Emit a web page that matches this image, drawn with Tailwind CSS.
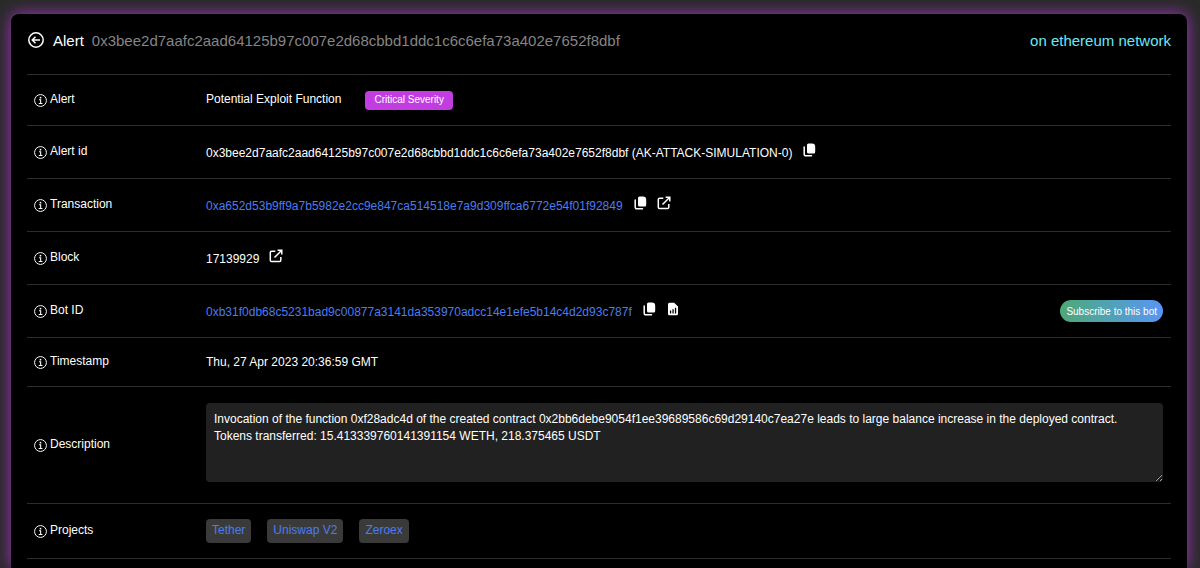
<!DOCTYPE html>
<html lang="en">
<head>
<meta charset="utf-8">
<meta name="viewport" content="width=device-width, initial-scale=1">
<title>Alert details</title>
<script src="https://cdn.jsdelivr.net/npm/@tailwindcss/browser@4"></script>
</head>
<body class="min-h-screen overflow-x-hidden bg-[#2a2a2a] font-['Liberation_Sans',Arial,sans-serif] text-[12px] leading-[17px] text-white">
<svg class="hidden" aria-hidden="true">
  <symbol id="info" viewBox="0 0 16 16"><circle cx="8" cy="8" r="7.3" fill="none" stroke="currentColor" stroke-width="1.2"/><circle cx="8" cy="4.500" r="1.100" fill="currentColor"/><path d="M6.200 7h2v4.600M5.800 11.600h4.600" fill="none" stroke="currentColor" stroke-width="1.300"/></symbol>
  <symbol id="copy" viewBox="0 0 14 14"><path d="M6.500 0.500h3.500q3.200 0 3.200 3.200V9a1.500 1.500 0 0 1-1.500 1.500H6.500A1.500 1.500 0 0 1 5 9V2A1.500 1.500 0 0 1 6.500.5z" fill="currentColor"/><path d="M2.200 4v7.300a1.500 1.500 0 0 0 1.500 1.500H9.500" fill="none" stroke="currentColor" stroke-width="1.500" stroke-linecap="round"/></symbol>
  <symbol id="open" viewBox="0 0 14 14"><path d="M6.300 2.300H2.600A1.300 1.300 0 0 0 1.300 3.600v7.700a1.300 1.300 0 0 0 1.300 1.300h7.900a1.300 1.300 0 0 0 1.300-1.300V8M8.600 1.200h4.200v4.200M12.500 1.500L5.500 8.500" fill="none" stroke="currentColor" stroke-width="1.500"/></symbol>
  <symbol id="report" viewBox="0 0 14 14"><path fill-rule="evenodd" d="M3.500.8h4.700L12 4.600v7.100a1.500 1.500 0 0 1-1.500 1.500h-7A1.500 1.500 0 0 1 2 11.700V2.300A1.500 1.500 0 0 1 3.500.8zM3.900 8.600v2.800h1.300V8.600zM6.400 7.200v4.200h1.300V7.200zM8.900 5.800v5.600h1.300V5.800z" fill="currentColor"/></symbol>
</svg>
<main class="mx-[11px] mr-[13px] mt-[14px] min-h-[calc(100vh-14px)] rounded-t-lg bg-black px-4 shadow-[0_0_15px_0_#a232c0]">
  <header class="flex h-[60px] items-center pb-2 text-[15px]">
    <button type="button" aria-label="Back" class="ml-px mr-[9px]">
      <svg class="size-4" viewBox="0 0 16 16" fill="none" stroke="currentColor" stroke-width="1.500"><circle cx="8" cy="8" r="7.200"/><path d="M12 8H4.500M7.500 4.800L4.300 8l3.200 3.200"/></svg>
    </button>
    <h1 class="flex gap-2"><span>Alert</span><span class="text-[#858585]">0x3bee2d7aafc2aad64125b97c007e2d68cbbd1ddc1c6c6efa73a402e7652f8dbf</span></h1>
    <span class="ml-auto text-[#67e8f9]">on ethereum network</span>
  </header>
  <table class="w-full text-left">
    <tbody>
      <tr class="h-[51px] border-y border-[#2c2c2c]">
        <th scope="row" class="w-[179px] pl-[7px] font-normal"><span class="flex items-center gap-[3px]"><svg class="size-[13px]"><use href="#info"/></svg><span class="pb-0.5">Alert</span></span></th>
        <td class="pr-2"><div class="flex items-center gap-6"><span class="pb-0.5">Potential Exploit Function</span><span class="h-[19px] rounded bg-[#c13de2] px-[9px] text-[10px]">Critical Severity</span></div></td>
      </tr>
      <tr class="h-[53px] border-b border-[#2c2c2c]">
        <th scope="row" class="pl-[7px] font-normal"><span class="flex items-center gap-[3px]"><svg class="size-[13px]"><use href="#info"/></svg><span class="pb-0.5">Alert id</span></span></th>
        <td class="pr-2"><div class="flex items-center gap-[10px]"><span class="pt-0.5">0x3bee2d7aafc2aad64125b97c007e2d68cbbd1ddc1c6c6efa73a402e7652f8dbf (AK-ATTACK-SIMULATION-0)</span><button type="button" aria-label="Copy alert id" class="pb-1"><svg class="size-[14px]"><use href="#copy"/></svg></button></div></td>
      </tr>
      <tr class="h-[53px] border-b border-[#2c2c2c]">
        <th scope="row" class="pl-[7px] font-normal"><span class="flex items-center gap-[3px]"><svg class="size-[13px]"><use href="#info"/></svg><span class="pb-0.5">Transaction</span></span></th>
        <td class="pr-2"><div class="flex items-center gap-[10px]"><a href="#" class="pt-0.5 text-[#4a7df0]">0xa652d53b9ff9a7b5982e2cc9e847ca514518e7a9d309ffca6772e54f01f92849</a><button type="button" aria-label="Copy transaction" class="pb-1"><svg class="size-[14px]"><use href="#copy"/></svg></button><a href="#" aria-label="Open transaction" class="pb-1"><svg class="size-[14px]"><use href="#open"/></svg></a></div></td>
      </tr>
      <tr class="h-[53px] border-b border-[#2c2c2c]">
        <th scope="row" class="pl-[7px] font-normal"><span class="flex items-center gap-[3px]"><svg class="size-[13px]"><use href="#info"/></svg><span class="pb-0.5">Block</span></span></th>
        <td class="pr-2"><div class="flex items-center gap-[10px]"><span class="pt-0.5">17139929</span><a href="#" aria-label="Open block" class="pb-1"><svg class="size-[14px]"><use href="#open"/></svg></a></div></td>
      </tr>
      <tr class="h-[53px] border-b border-[#2c2c2c]">
        <th scope="row" class="pl-[7px] font-normal"><span class="flex items-center gap-[3px]"><svg class="size-[13px]"><use href="#info"/></svg><span class="pb-0.5">Bot ID</span></span></th>
        <td class="pr-2"><div class="flex items-center gap-[10px]"><a href="#" class="pt-0.5 text-[#4a7df0]">0xb31f0db68c5231bad9c00877a3141da353970adcc14e1efe5b14c4d2d93c787f</a><button type="button" aria-label="Copy bot ID" class="pb-1"><svg class="size-[14px]"><use href="#copy"/></svg></button><a href="#" aria-label="Bot report" class="pb-1"><svg class="size-[14px]"><use href="#report"/></svg></a><button type="button" class="ml-auto h-[22px] rounded-full bg-linear-to-r from-[#4fa874] to-[#5b94f5] px-[6px] text-[10px]">Subscribe to this bot</button></div></td>
      </tr>
      <tr class="h-[49px] border-b border-[#2c2c2c]">
        <th scope="row" class="pl-[7px] font-normal"><span class="flex items-center gap-[3px]"><svg class="size-[13px]"><use href="#info"/></svg><span class="pb-0.5">Timestamp</span></span></th>
        <td class="pr-2">Thu, 27 Apr 2023 20:36:59 GMT</td>
      </tr>
      <tr class="h-[117px] border-b border-[#2c2c2c]">
        <th scope="row" class="pl-[7px] font-normal"><label for="description" class="flex items-center gap-[3px]"><svg class="size-[13px]"><use href="#info"/></svg><span class="pb-0.5">Description</span></label></th>
        <td class="pb-[6px] pr-2"><textarea id="description" readonly class="block h-[79px] w-full rounded bg-[#212121] p-2">Invocation of the function 0xf28adc4d of the created contract 0x2bb6debe9054f1ee39689586c69d29140c7ea27e leads to large balance increase in the deployed contract.
Tokens transferred: 15.413339760141391154 WETH, 218.375465 USDT</textarea></td>
      </tr>
      <tr class="h-[55px] border-b border-[#2c2c2c]">
        <th scope="row" class="pl-[7px] font-normal"><span class="flex items-center gap-[3px]"><svg class="size-[13px]"><use href="#info"/></svg><span class="pb-0.5">Projects</span></span></th>
        <td class="pr-2"><div class="flex gap-4 text-[#4a7df0]"><a href="#" class="rounded bg-[#3a3a3a] px-[6px] pb-1 pt-[3px]">Tether</a><a href="#" class="rounded bg-[#3a3a3a] px-[6px] pb-1 pt-[3px]">Uniswap V2</a><a href="#" class="rounded bg-[#3a3a3a] px-[6px] pb-1 pt-[3px]">Zeroex</a></div></td>
      </tr>
    </tbody>
  </table>
</main>
</body>
</html>
